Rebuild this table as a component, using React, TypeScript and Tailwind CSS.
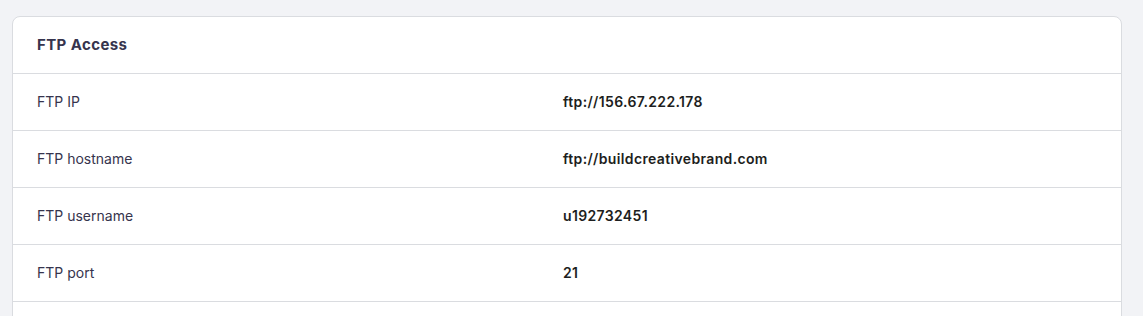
import React from 'react';

const rows = [
  { label: 'FTP IP', value: 'ftp://156.67.222.178' },
  { label: 'FTP hostname', value: 'ftp://buildcreativebrand.com' },
  { label: 'FTP username', value: 'u192732451' },
  { label: 'FTP port', value: '21' },
];

export default function App() {
  return (
    <div
      className="h-[316px] w-[1143px] overflow-hidden bg-[#f2f3f6] pl-3 pt-4"
      style={{ fontFamily: 'Inter, "Noto Sans", sans-serif' }}
    >
      <div className="h-[320px] w-[1110px] overflow-hidden rounded-t-lg border border-[#dadce0] bg-white">
        {/* header */}
        <div className="flex h-14 items-center px-6">
          <h2 className="text-[15px] font-bold tracking-[0.4px] text-[#36344d]">FTP Access</h2>
        </div>

        {/* rows */}
        {rows.map((row) => (
          <div key={row.label} className="flex h-[57px] items-center border-t border-[#dadce0] px-6">
            <div className="w-[526px] text-sm text-[#36344d]">{row.label}</div>
            <div className="text-sm font-semibold tracking-[0.35px] text-[#1d1e20]">{row.value}</div>
          </div>
        ))}
        <div className="border-t border-[#dadce0]" />
      </div>
    </div>
  );
}
